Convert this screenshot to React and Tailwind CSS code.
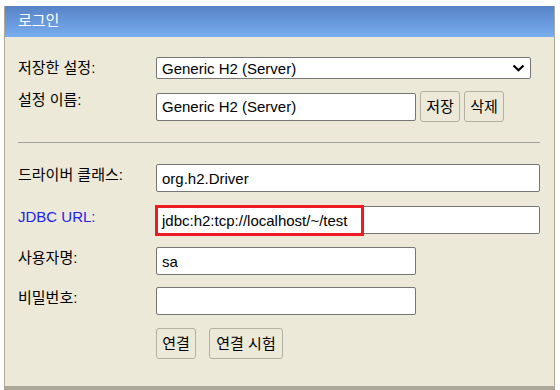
export default function App() {
  const font = { fontFamily: '"Liberation Sans", "Noto Sans CJK KR", Arial, sans-serif' };
  const inputCls =
    "h-[28px] bg-white border border-[#767676] rounded-[2px] pl-[5px] flex items-center text-[15px] text-black leading-none";
  const btnCls =
    "h-[31px] bg-[#ece9d8] border border-[#b3b0a3] rounded-[3px] flex items-center justify-center text-[15px] text-black leading-none";
  const labelCls = "w-[138px] shrink-0 text-[15px] leading-[18px] text-black";
  return (
    <div className="w-[560px] h-[390px] bg-white overflow-hidden" style={font}>
      <div className="ml-[4px] mt-[6px] w-[551px] h-[384px] bg-[#ece9d8] border-l border-r border-b-4 border-[#aca899] flex flex-col">
        <div className="h-[31px] shrink-0 bg-gradient-to-b from-[#5783c6] to-[#77adf0] flex items-center pl-[13px] text-white text-[15px]">
          로그인
        </div>
        <div className="flex flex-col pl-[13px] pr-[14px]">
          {/* saved settings */}
          <div className="flex items-center mt-[20px]">
            <div className={labelCls}>저장한 설정:</div>
            <div className="w-[375px] h-[22px] bg-white border border-[#767676] rounded-[2px] pl-[5px] pr-[5px] flex items-center justify-between text-[15px] leading-none">
              <span>Generic H2 (Server)</span>
              <svg width="13" height="8" viewBox="0 0 13 8" className="mr-[0px]">
                <polyline points="1.5,1.5 6.5,6.2 11.5,1.5" fill="none" stroke="#000" strokeWidth="2.2" />
              </svg>
            </div>
          </div>
          {/* setting name */}
          <div className="flex items-start mt-[12px]">
            <div className={labelCls + " pt-[0px]"}>설정 이름:</div>
            <div className="flex items-center gap-[4px]">
              <div className={inputCls + " w-[260px]"}>Generic H2 (Server)</div>
              <div className={btnCls + " w-[40px]"}>저장</div>
              <div className={btnCls + " w-[40px]"}>삭제</div>
            </div>
          </div>
          <div className="mt-[20px] h-[1px] bg-[#a0a0a0]" />
          {/* driver */}
          <div className="flex items-start mt-[21px]">
            <div className={labelCls + " pt-[2px]"}>드라이버 클래스:</div>
            <div className={inputCls + " w-[384px]"}>org.h2.Driver</div>
          </div>
          {/* jdbc url */}
          <div className="flex items-start mt-[14px]">
            <div className="w-[138px] shrink-0 text-[15px] leading-[18px] text-[#2222ee] pt-[2px]">JDBC URL:</div>
            <div className="relative">
              <div className={inputCls + " w-[384px]"}>jdbc:h2:tcp://localhost/~/test</div>
              <div className="absolute left-[-1px] top-[-1px] w-[209px] h-[31px] border-[3px] border-[#ed1c24]" />
            </div>
          </div>
          {/* user */}
          <div className="flex items-start mt-[13px]">
            <div className={labelCls + " pt-[2px]"}>사용자명:</div>
            <div className={inputCls + " w-[260px]"}>sa</div>
          </div>
          {/* password */}
          <div className="flex items-start mt-[12px]">
            <div className={labelCls + " pt-[2px]"}>비밀번호:</div>
            <div className={inputCls + " w-[260px]"}></div>
          </div>
          {/* buttons */}
          <div className="flex items-start mt-[13px]">
            <div className="w-[138px] shrink-0" />
            <div className="flex gap-[13px]">
              <div className={btnCls + " w-[40px]"}>연결</div>
              <div className={btnCls + " w-[74px]"}>연결 시험</div>
            </div>
          </div>
        </div>
      </div>
    </div>
  );
}
